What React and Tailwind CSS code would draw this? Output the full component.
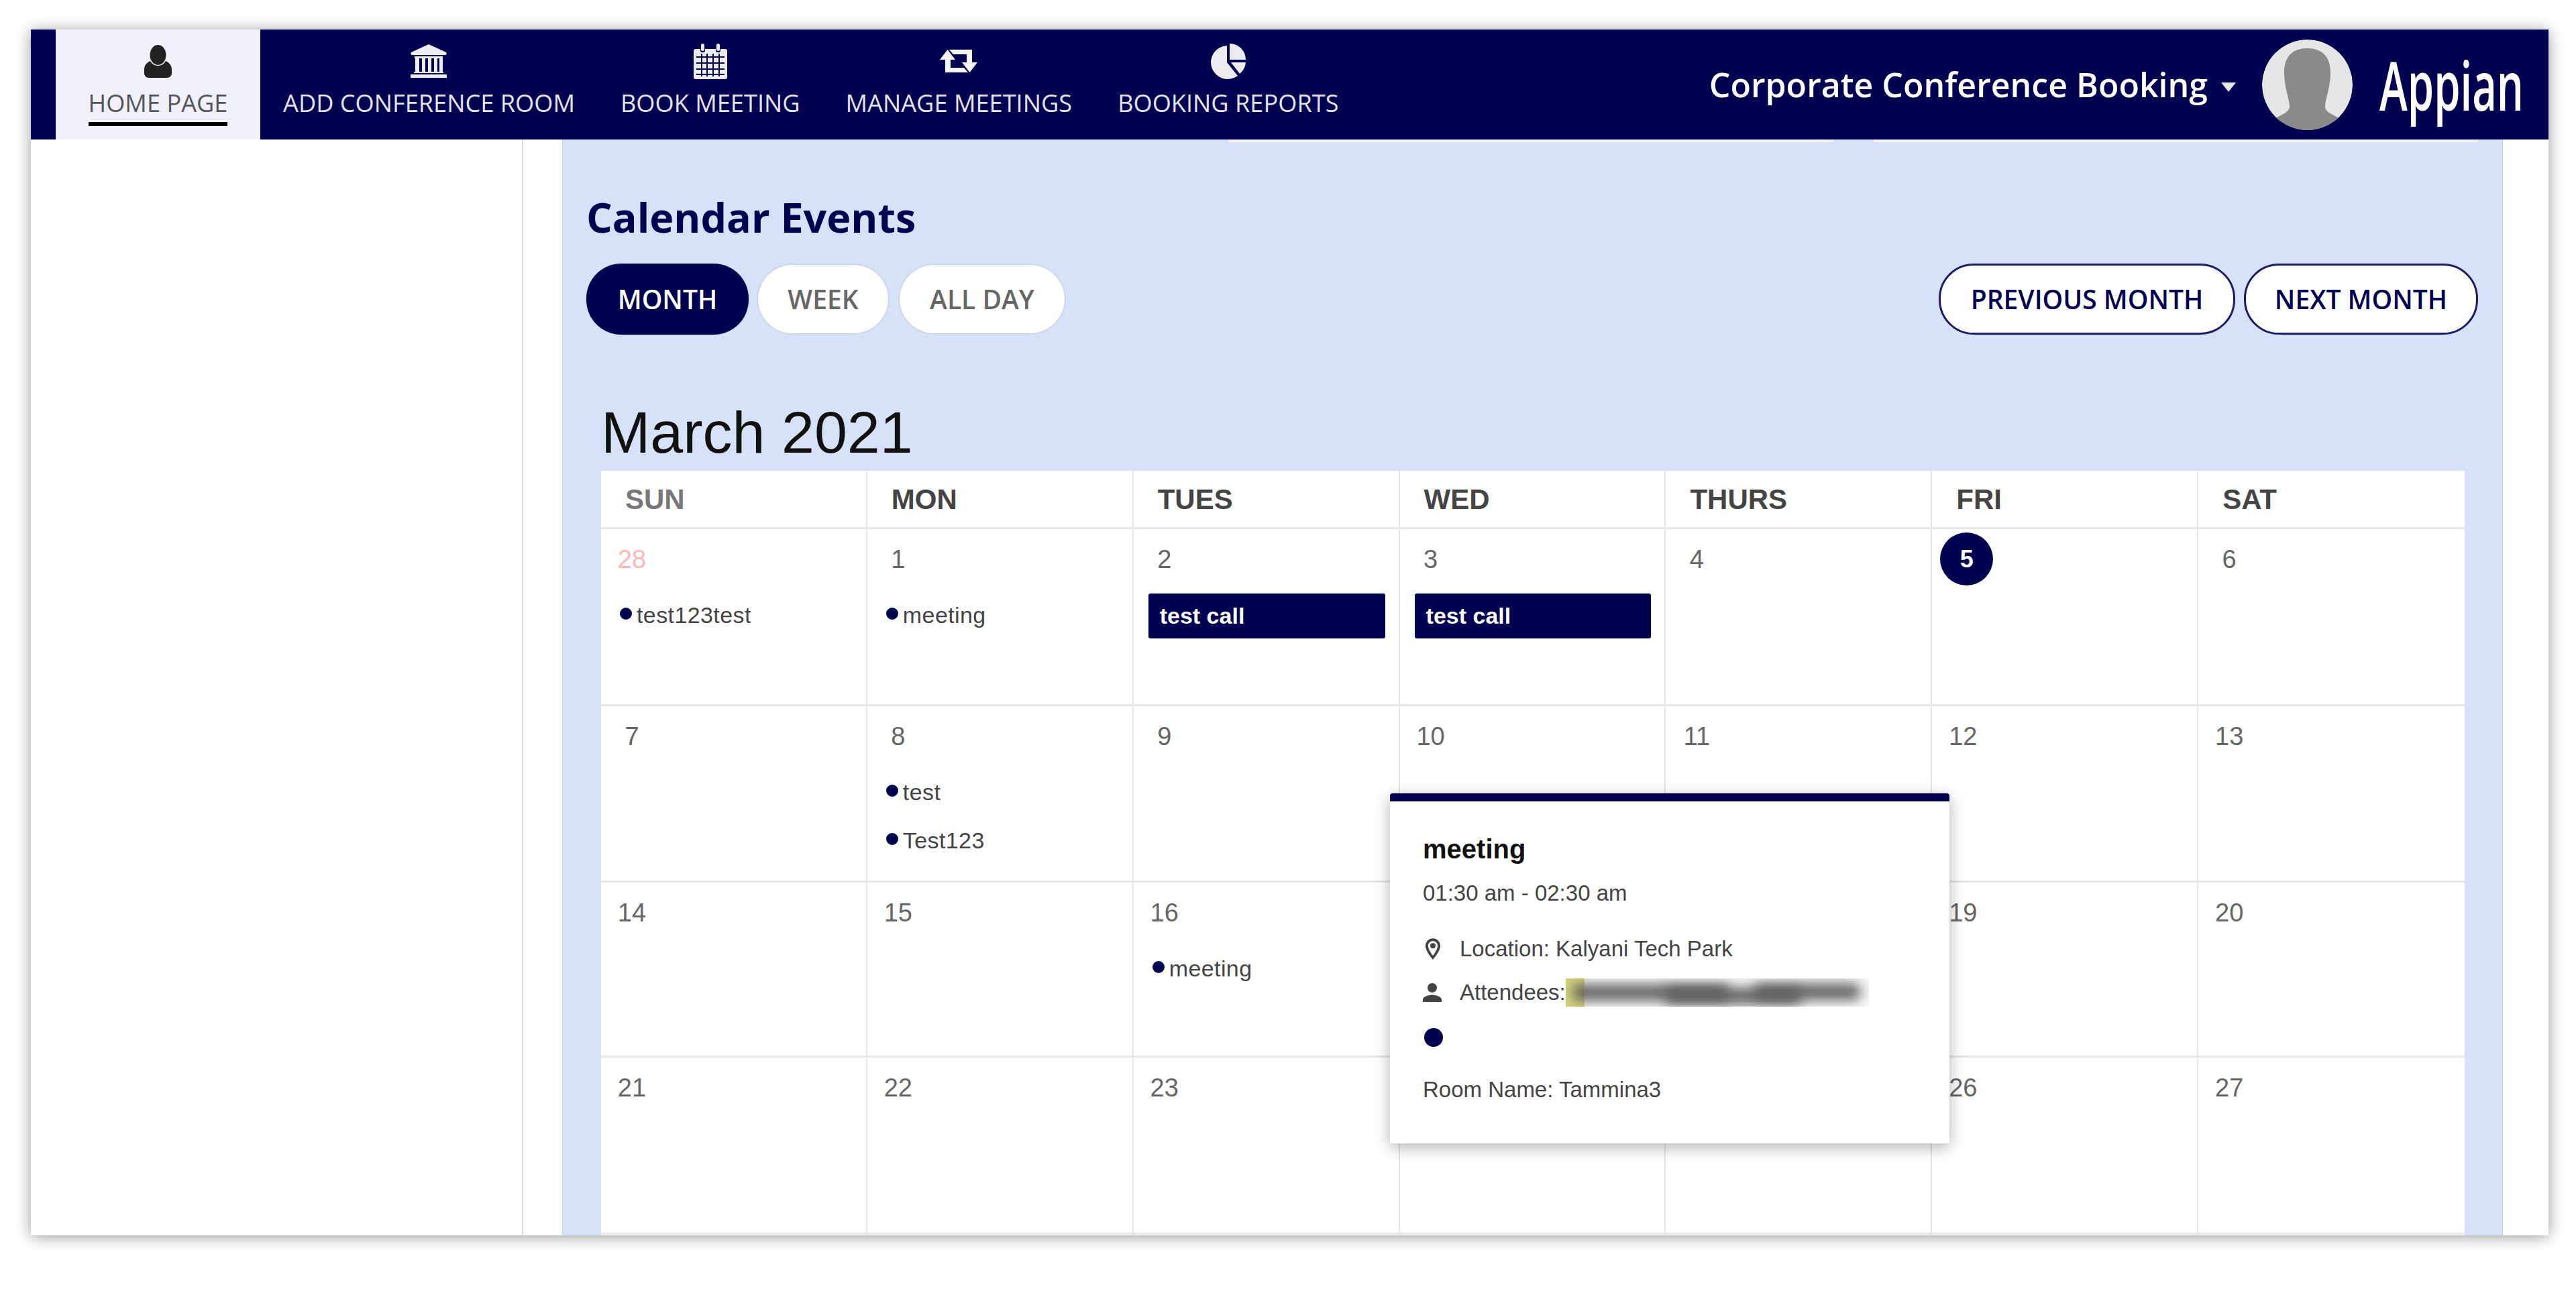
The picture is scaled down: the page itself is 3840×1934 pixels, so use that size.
const NAVY = '#000050'

const weeks = [
  [{ d: 28, muted: true, dots: ['test123test'] }, { d: 1, dots: ['meeting'] }, { d: 2, bar: 'test call' }, { d: 3, bar: 'test call' }, { d: 4 }, { d: 5, today: true }, { d: 6 }],
  [{ d: 7 }, { d: 8, dots: ['test', 'Test123'] }, { d: 9 }, { d: 10 }, { d: 11 }, { d: 12 }, { d: 13 }],
  [{ d: 14 }, { d: 15 }, { d: 16, dots: ['meeting'] }, { d: 17 }, { d: 18 }, { d: 19 }, { d: 20 }],
  [{ d: 21 }, { d: 22 }, { d: 23 }, { d: 24 }, { d: 25 }, { d: 26 }, { d: 27 }],
  [{}, {}, {}, {}, {}, {}, {}],
]
const rowHeights = ['h-[264px]', 'h-[263px]', 'h-[261px]', 'h-[264px]', 'h-[264px]']
const days = ['SUN', 'MON', 'TUES', 'WED', 'THURS', 'FRI', 'SAT']

function UserIcon() {
  return (
    <svg viewBox="0 0 41 49" className="h-[49px] w-[41px]" fill="#222">
      <ellipse cx="20.5" cy="15" rx="12" ry="15" />
      <path d="M9 24c3 5 7 7 11.5 7s8.500-2 11.500-7c5 2 9 6 9 13v5c0 4-3 7-7 7H7c-4 0-7-3-7-7v-5c0-7 4-11 9-13z" />
    </svg>
  )
}

function BankIcon() {
  return (
    <svg viewBox="0 0 54 50" className="h-[50px] w-[54px]" fill="#ececf2">
      <path d="M27 0 53 12c1 1 1 4-1 4H2c-2 0-2-3-1-4z" />
      <rect x="6" y="18" width="42" height="3" />
      <rect x="7" y="21" width="6" height="21" />
      <rect x="17" y="21" width="5" height="21" />
      <rect x="26" y="21" width="5" height="21" />
      <rect x="35" y="21" width="5" height="21" />
      <rect x="43" y="21" width="5" height="21" />
      <rect x="5" y="41" width="44" height="2" />
      <rect x="0" y="45" width="54" height="5" />
    </svg>
  )
}

function CalendarIcon() {
  return (
    <svg viewBox="0 0 50 53" className="h-[53px] w-[50px]" fill="#ececf2">
      <path d="M3 8h7v3c0 3 7 3 7 0V8h16v3c0 3 7 3 7 0V8h7c2 0 3 1 3 3v39c0 2-1 3-3 3H3c-2 0-3-1-3-3V11c0-2 1-3 3-3z" />
      <rect x="11" y="0" width="5" height="11" rx="2.500" />
      <rect x="34" y="0" width="5" height="11" rx="2.500" />
      <g fill={NAVY}>
        <rect x="4" y="19" width="42" height="2" />
        <rect x="4" y="28" width="42" height="2" />
        <rect x="4" y="37" width="42" height="2" />
        <rect x="4" y="45" width="42" height="2" />
        <rect x="11" y="15" width="2" height="34" />
        <rect x="19" y="15" width="2" height="34" />
        <rect x="28" y="15" width="2" height="34" />
        <rect x="37" y="15" width="2" height="34" />
      </g>
    </svg>
  )
}

function RetweetIcon() {
  return (
    <svg viewBox="0 0 56 34" className="h-[34px] w-[56px]" fill="#f4f4f8">
      <polygon points="0,15 11.500,0 23,15 16,15 16,27 36,27 42,34 8,34 8,15" />
      <polygon points="56,19 44.500,34 33,19 40,19 40,7 20,7 14,0 48,0 48,19" />
    </svg>
  )
}

function PieIcon() {
  return (
    <svg viewBox="0 0 53 53" className="h-[53px] w-[53px]" fill="#ececf0">
      <path d="M25 3A25 25 0 1 0 41 48L25 28Z" />
      <path d="M29 0A24 24 0 0 1 53 24H29Z" />
      <path d="M31 28H53A24 24 0 0 1 44 45Z" />
    </svg>
  )
}

function NavItem({ label, icon, active }) {
  return (
    <div
      className={`flex h-full flex-col items-center pt-[19px] ${active ? 'w-[305px] bg-[#f1f1fe] text-[#555]' : 'px-[34px] text-[#e4e4ee]'}`}
    >
      <div className="flex h-[56px] items-center justify-center">{icon}</div>
      <div className={`mt-[11px] whitespace-nowrap text-[36.2px] leading-[46px] ${active ? 'border-b-[6px] border-black pb-[6px]' : ''}`}>
        {label}
      </div>
    </div>
  )
}

function Avatar() {
  return (
    <svg viewBox="0 0 135 135" className="h-[135px] w-[135px] shrink-0 rounded-full">
      <circle cx="67.500" cy="67.500" r="67.500" fill="#e6e6e6" />
      <path d="M67 13C47 13 32 24 33 52c1 22 8 38 8 48 0 8-12 12-22 18 11 11 28 17 48 17s38-6 49-17c-10-6-22-10-22-18 0-10 7-26 8-48 1-28-14-39-35-39z" fill="#8a8a8a" />
    </svg>
  )
}

function Pill({ children, kind }) {
  const styles = {
    active: 'h-[106px] w-[242px] bg-[#000050] font-semibold text-white',
    idle: 'h-[102px] bg-white font-semibold text-[#666] shadow-[0_0_3px_rgba(0,0,0,0.2)]',
    outline: 'h-[106px] border-[3px] border-[#1c1c66] bg-white font-semibold text-[#000050]',
  }
  return (
    <div className={`flex items-center justify-center rounded-[52px] text-[39px] ${styles[kind]}`}>{children}</div>
  )
}

function Cell({ cell, last }) {
  return (
    <div className={`relative h-full border-[#e6e6e6] ${last ? '' : 'border-r-2'}`}>
      {cell.today && (
        <div className="ml-[12px] mt-[5px] flex h-[79px] w-[79px] items-center justify-center rounded-full bg-[#000050] text-[36px] font-bold text-white">
          {cell.d}
        </div>
      )}
      {cell.d && !cell.today && (
        <div className={`ml-[16px] mt-[22px] h-[46px] w-[60px] text-center text-[38px] leading-[46px] ${cell.muted ? 'text-[#ffb6b6]' : 'text-[#666]'}`}>
          {cell.d}
        </div>
      )}
      {cell.dots && (
        <div className="mt-[37px] flex flex-col gap-[26px] pl-[28px]">
          {cell.dots.map((t) => (
            <div key={t} className="flex h-[46px] items-center gap-[7px] text-[34px] leading-[46px] tracking-[0.4px] text-[#444]">
              <span className="mb-[4px] h-[18px] w-[18px] rounded-full bg-[#000050]" />
              {t}
            </div>
          ))}
        </div>
      )}
      {cell.bar && (
        <div className="ml-[22px] mr-[20px] mt-[28px] flex h-[67px] items-center rounded-[3px] bg-[#000050] pl-[17px] text-[34px] font-bold text-white">
          {cell.bar}
        </div>
      )}
    </div>
  )
}

function Popover() {
  return (
    <div className="absolute left-[1176px] top-[481px] z-10 h-[522px] w-[834px] text-[33px] text-[#444]">
      <div className="absolute left-[-14px] top-[251px] h-[30px] w-[30px] rotate-45 bg-white" />
      <div className="relative h-full rounded-[3px] bg-white shadow-[0_6px_24px_rgba(0,0,0,0.3)]">
        <div className="h-[12px] rounded-t-[4px] bg-[#000050]" />
        <div className="pl-[49px] pt-[48px]">
          <div className="text-[40px] font-bold leading-[46px] text-[#111]">meeting</div>
          <div className="mt-[20px] leading-[46px]">01:30 am - 02:30 am</div>
          <div className="mt-[37px] flex h-[46px] items-center">
            <svg viewBox="0 0 24 24" className="ml-[-4px] h-[38px] w-[38px]" fill="#444">
              <path d="M12 2C8.130 2 5 5.130 5 9c0 5.250 7 13 7 13s7-7.750 7-13c0-3.870-3.130-7-7-7zM7.500 9c0-2.480 2.020-4.500 4.500-4.500s4.500 2.020 4.500 4.500c0 2.880-2.880 7.190-4.500 9.380C10.400 16.190 7.500 11.850 7.500 9z" />
              <circle cx="12" cy="9" r="2.500" />
            </svg>
            <span className="ml-[21px]">Location: Kalyani Tech Park</span>
          </div>
          <div className="mt-[19px] flex h-[46px] items-center">
            <svg viewBox="4 4 16 16" className="h-[28px] w-[28px]" fill="#444">
              <path d="M12 12c2.210 0 4-1.790 4-4s-1.790-4-4-4-4 1.790-4 4 1.790 4 4 4zm0 2c-2.670 0-8 1.340-8 4v2h16v-2c0-2.660-5.330-4-8-4z" />
            </svg>
            <span className="ml-[27px]">Attendees:</span>
            <span className="relative block h-[42px] w-[452px] overflow-hidden bg-[#f6f6f6]">
              <span className="absolute left-0 top-0 h-full w-[28px] bg-[#d2d27a]" />
              <span className="absolute left-[12px] top-[9px] h-[24px] w-[230px] bg-[#606060] blur-[9px]" />
              <span className="absolute left-[150px] top-[14px] h-[24px] w-[200px] bg-[#606060] blur-[9px]" />
              <span className="absolute left-[280px] top-[8px] h-[24px] w-[160px] rounded-full bg-[#606060] blur-[9px]" />
            </span>
          </div>
          <div className="ml-[2px] mt-[30px] h-[28px] w-[28px] rounded-full bg-[#000050]" />
          <div className="mt-[41px] leading-[46px]">Room Name: Tammina3</div>
        </div>
      </div>
    </div>
  )
}

export default function App() {
  return (
    <div className="h-[1934px] w-[3840px] overflow-hidden bg-white pl-[46px] pt-[44px]" style={{ fontFamily: '"Open Sans", sans-serif' }}>
      <div className="flex h-[1798px] w-[3753px] flex-col bg-white shadow-[0_2px_22px_rgba(0,0,0,0.4)]">
        <header className="flex h-[164px] shrink-0 items-center bg-[#000050] pl-[37px]">
          <NavItem active label="HOME PAGE" icon={<UserIcon />} />
          <NavItem label="ADD CONFERENCE ROOM" icon={<BankIcon />} />
          <NavItem label="BOOK MEETING" icon={<CalendarIcon />} />
          <NavItem label="MANAGE MEETINGS" icon={<RetweetIcon />} />
          <NavItem label="BOOKING REPORTS" icon={<PieIcon />} />
          <div className="ml-auto flex items-center pr-[38px]">
            <span className="whitespace-nowrap text-[50px] font-semibold text-white">Corporate Conference Booking</span>
            <span className="ml-[20px] mr-[39px] mt-[8px] h-0 w-0 border-x-[11px] border-t-[14px] border-x-transparent border-t-[#e8e8e8]" />
            <Avatar />
            <div className="ml-[40px] w-[214px] origin-left scale-x-[0.62] whitespace-nowrap text-[102px] font-semibold leading-[102px] text-white">Appian</div>
          </div>
        </header>

        <div className="flex min-h-0 flex-1">
          <aside className="h-full w-[734px] shrink-0 border-r-2 border-[#d9d9d9]" />
          <div className="w-[58px] shrink-0" />
          <main className="flex h-full w-[2893px] shrink-0 flex-col overflow-hidden border-x border-[#c9d3e4] bg-[#d5e2f8]">
            <div className="flex h-[4px] shrink-0">
              <div className="ml-[992px] h-full w-[902px] bg-[#f2f2f0]" />
              <div className="ml-[60px] h-full w-[901px] bg-[#f2f2f0]" />
            </div>
            <div className="flex shrink-0 flex-col pl-[35px] pr-[36px]">
              <h1 className="mt-[71px] text-[61px] font-bold leading-[82px] text-[#000050]">Calendar Events</h1>
              <div className="mt-[28px] flex items-center">
                <Pill kind="active">MONTH</Pill>
                <div className="ml-[14px] w-[194px]"><Pill kind="idle">WEEK</Pill></div>
                <div className="ml-[17px] w-[246px]"><Pill kind="idle">ALL DAY</Pill></div>
                <div className="ml-auto w-[442px]"><Pill kind="outline">PREVIOUS MONTH</Pill></div>
                <div className="ml-[13px] w-[349px]"><Pill kind="outline">NEXT MONTH</Pill></div>
              </div>
            </div>
            <div className="ml-[57px] w-[2778px] shrink-0" style={{ fontFamily: '"Liberation Sans", Arial, sans-serif' }}>
              <div className="mt-[96px] text-[88px] leading-[100px] text-[#111]">March 2021</div>
              <div className="relative mt-[7px] bg-white">
                <div className="grid h-[87px] grid-cols-7 border-b-[3px] border-[#e6e6e6]">
                  {days.map((d, i) => (
                    <div key={d} className={`flex items-center pl-[36px] text-[42px] font-bold ${i === 0 ? 'text-[#777]' : 'text-[#444]'} ${i < 6 ? 'border-r-2 border-[#e6e6e6]' : ''}`}>
                      {d}
                    </div>
                  ))}
                </div>
                {weeks.map((w, i) => (
                  <div key={i} className={`grid grid-cols-7 border-b-[3px] border-[#e6e6e6] ${rowHeights[i]}`}>
                    {w.map((c, j) => (
                      <Cell key={j} cell={c} last={j === 6} />
                    ))}
                  </div>
                ))}
                <Popover />
              </div>
            </div>
          </main>
        </div>
      </div>
    </div>
  )
}
